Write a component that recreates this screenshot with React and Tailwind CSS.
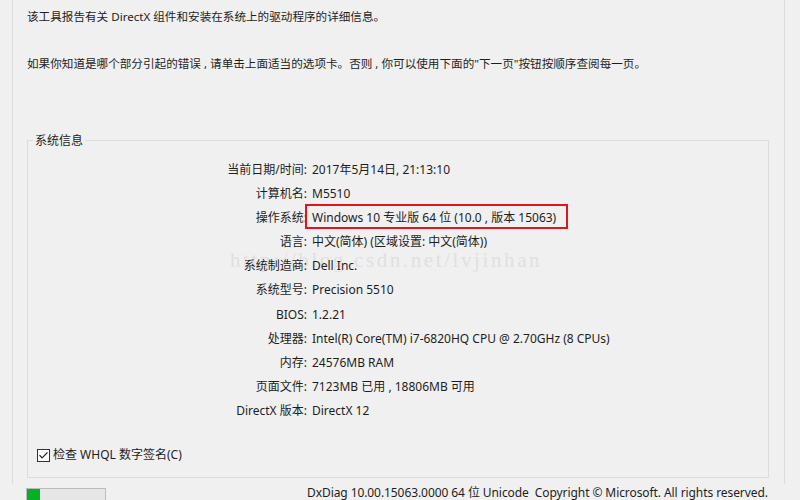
import { Check } from 'lucide-react';

const rows = [
  ['当前日期/时间:', '2017年5月14日, 21:13:10'],
  ['计算机名:', 'M5510'],
  ['操作系统:', 'Windows 10 专业版 64 位 (10.0 , 版本 15063)', true],
  ['语言:', '中文(简体) (区域设置: 中文(简体))'],
  ['系统制造商:', 'Dell Inc.'],
  ['系统型号:', 'Precision 5510'],
  ['BIOS:', '1.2.21'],
  ['处理器:', 'Intel(R) Core(TM) i7-6820HQ CPU @ 2.70GHz (8 CPUs)'],
  ['内存:', '24576MB RAM'],
  ['页面文件:', '7123MB 已用 , 18806MB 可用'],
  ['DirectX 版本:', 'DirectX 12'],
];

const font = { fontFamily: '"Noto Sans", "Noto Sans CJK SC", sans-serif' };

export default function App() {
  return (
    <div className="w-[800px] h-[500px] bg-[#f0f0f0] overflow-hidden text-[12px] text-[#1e1e1e]" style={font}>
      <div className="ml-[12px] w-[773px] h-[484px] border-l border-r border-[#dcdcdc] pl-[14px] pt-[8px]">
        <p className="leading-[18px] text-[11.6px]">该工具报告有关 DirectX 组件和安装在系统上的驱动程序的详细信息。</p>
        <p className="leading-[18px] mt-[29px] text-[11.6px]">如果你知道是哪个部分引起的错误 , 请单击上面适当的选项卡。否则 , 你可以使用下面的"下一页"按钮按顺序查阅每一页。</p>

        <div className="relative mt-[67px] w-[742px] h-[338px] border border-[#dcdcdc] pt-[17px]">
          <span className="absolute left-[5px] -top-[9px] bg-[#f0f0f0] px-[2px] leading-[18px]">系统信息</span>
          <div className="absolute left-[202px] top-[104px] text-[21px] text-[#e0e0e0] tracking-[2.6px]" style={{ fontFamily: '"Liberation Serif", serif' }}>
            http://blog.csdn.net/lvjinhan
          </div>
          <div className="relative grid grid-cols-[279px_1fr] gap-x-[5px]">
            {rows.map(([k, v, hl]) => (
              <div key={k} className="contents">
                <div className="text-right h-[24.1px] leading-[24px]">{k}</div>
                <div className="h-[24.1px] leading-[24px]">
                  <span className="relative">
                    {v}
                    {hl && <span className="absolute -left-[7px] -right-[12px] -top-[5px] -bottom-[3px] border-2 border-[#e0141e]" />}
                  </span>
                </div>
              </div>
            ))}
          </div>
          <label className="flex items-center gap-[3px] ml-[9px] mt-[24px]">
            <span className="w-[13px] h-[13px] border border-[#333] bg-white flex items-center justify-center">
              <Check size={11} strokeWidth={2.5} className="text-[#222]" />
            </span>
            <span className="leading-[16px]">检查 WHQL 数字签名(C)</span>
          </label>
        </div>
      </div>
      <div className="flex items-start mt-[4px] pl-[26px]">
        <div className="w-[80px] h-[14px] border border-[#bcbcbc] bg-[#e6e6e6] flex">
          <div className="w-[13px] h-full bg-[#06b025]" />
        </div>
        <span className="ml-[201px] -mt-[3px] leading-[16px] whitespace-pre tracking-[-0.08px]">DxDiag 10.00.15063.0000 64 位 Unicode  Copyright © Microsoft. All rights reserved.</span>
      </div>
    </div>
  );
}
